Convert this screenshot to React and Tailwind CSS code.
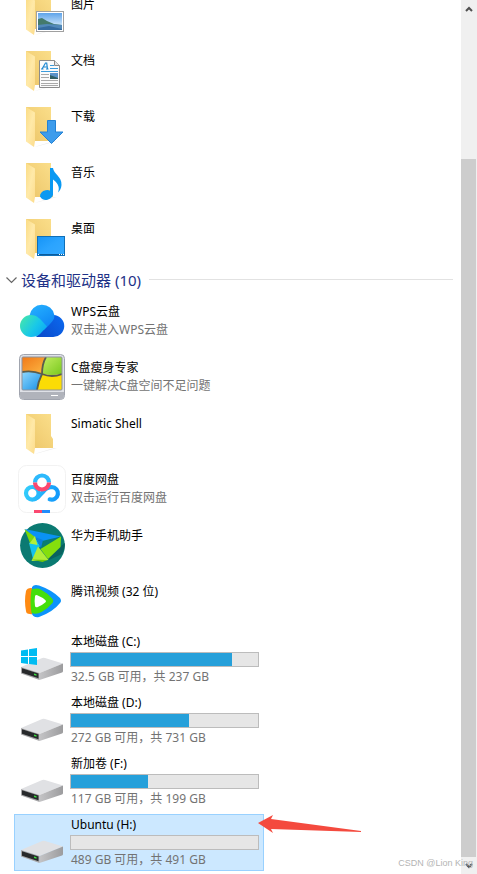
import { useId } from "react";

const Icon = ({ children }) => (
  <svg className="size-12 shrink-0 overflow-visible" viewBox="0 0 48 48" aria-hidden="true">
    {children}
  </svg>
);

const Folder = ({ children }) => {
  const id = useId();
  return (
    <Icon>
      <defs>
        <linearGradient id={`${id}back`} x1="0" y1="1" x2="1" y2="0">
          <stop offset="0" stopColor="#ecc568" />
          <stop offset="1" stopColor="#fbdf8b" />
        </linearGradient>
        <linearGradient id={`${id}flap`} x1="0" y1="0" x2="1" y2="1">
          <stop offset="0" stopColor="#fbdc85" />
          <stop offset="0.5" stopColor="#ffe9a8" />
          <stop offset="1" stopColor="#fcdc8c" />
        </linearGradient>
      </defs>
      <path d="M16 44l20-6h3l-18 5z" fill="#eeeeee" />
      <path d="M8 4h25v22l2 3v9H17L8 30z" fill={`url(#${id}back)`} />
      <path d="M8 4l9 5.500v28.500l-1 6L8 38.500z" fill={`url(#${id}flap)`} />
      {children}
    </Icon>
  );
};

const PicturesIcon = () => (
  <Folder>
    <defs>
      <linearGradient id="sky" x1="0" y1="0" x2="0" y2="1">
        <stop offset="0" stopColor="#5fa4ea" />
        <stop offset="1" stopColor="#f2fbff" />
      </linearGradient>
    </defs>
    <rect x="18.500" y="20.500" width="27" height="20" fill="#fff" stroke="#a0a0a0" />
    <rect x="20" y="22" width="24" height="17" fill="url(#sky)" />
    <path d="M20 28l4-1 5 3 7 3 8 1v5H20z" fill="#447a6c" />
    <path d="M20 34l9-1 15 1v5H20z" fill="#5289b9" />
    <path d="M20 37l11-2 13 3v1H20z" fill="#356ba0" />
  </Folder>
);

const DocumentsIcon = () => (
  <Folder>
    <path d="M21.500 13.500h15l5 5v22h-20z" fill="#fbfbfb" stroke="#8b8b8b" />
    <path d="M36.500 13.500v5h5" fill="#e4e4e4" stroke="#8b8b8b" />
    <path d="M24 22l3.500-6h1.200l.8 6M25.500 20h4M23 22h2.500M28 22h2.500" fill="none" stroke="#1e88d2" strokeWidth="1.200" />
    <path d="M32 18.500h4M32 21.500h8M23 24.500h17" stroke="#3a9bdc" strokeWidth="1" />
    <path d="M23 27.500h8M23 30.500h8M23 33.500h17M23 36.500h17M23 38.500h17" stroke="#a9a9a9" />
    <rect x="32" y="26" width="8" height="6" fill="#5a93c9" />
    <path d="M32 28l8 3v1h-8z" fill="#2f5f63" />
  </Folder>
);

const DownloadsIcon = () => (
  <Folder>
    <path d="M29.500 17.500h8V29h7.500L33.500 40.500 22 29h7.500z" fill="#3d9cec" stroke="#2482d4" />
  </Folder>
);

const MusicIcon = () => (
  <Folder>
    <ellipse cx="28.500" cy="36" rx="6.500" ry="4.800" fill="#0a99f2" transform="rotate(-12 28.500 36)" />
    <path d="M32 9h3c.5 6 9 8.500 8.500 17-.2 3-1.500 5.500-3.500 7.500 1.500-4 1.500-8-5-13V36h-3z" fill="#0a99f2" />
  </Folder>
);

const DesktopIcon = () => (
  <Folder>
    <defs>
      <linearGradient id="desk" x1="0" y1="0" x2="1" y2="1">
        <stop offset="0" stopColor="#1594f7" />
        <stop offset="0.5" stopColor="#2ba4ff" />
        <stop offset="1" stopColor="#35aaff" />
      </linearGradient>
    </defs>
    <rect x="19.500" y="21.500" width="27" height="19" fill="url(#desk)" stroke="#0f6fb8" />
    <path d="M20 39.500h26" stroke="#0b5c9d" />
    <path d="M20 39.500h1M41 39.500h1M43 39.500h1M45 39.500h1" stroke="#fff" />
  </Folder>
);

const WpsIcon = () => (
  <Icon>
    <defs>
      <linearGradient id="wpsTop" x1="0" y1="0" x2="0.600" y2="1">
        <stop offset="0" stopColor="#27b3ff" />
        <stop offset="1" stopColor="#0e86f5" />
      </linearGradient>
      <linearGradient id="wpsRight" x1="0" y1="1" x2="1" y2="0.300">
        <stop offset="0" stopColor="#0a48c8" />
        <stop offset="1" stopColor="#0b66ec" />
      </linearGradient>
      <linearGradient id="wpsLeft" x1="0" y1="0.200" x2="1" y2="0.800">
        <stop offset="0" stopColor="#43e5ae" />
        <stop offset="0.550" stopColor="#19c8e8" />
        <stop offset="1" stopColor="#0aa5f7" />
      </linearGradient>
    </defs>
    <path d="M35.500 17a11 11 0 0 1-.5 22H18l11-13z" fill="url(#wpsRight)" />
    <path d="M11.500 17.500a12.500 12 0 0 1 24.800-.5c.4 4-1.800 6.500-4.300 9L26 32 12 22z" fill="url(#wpsTop)" />
    <path d="M13 17c5 0 8 3 10.500 5.500L29 28.500l-7 7.500c-2 2-5 3-9 3a11 11 0 0 1 0-22z" fill="url(#wpsLeft)" />
  </Icon>
);

const SlimIcon = () => (
  <Icon>
    <defs>
      <linearGradient id="slimBlue" x1="0" y1="0" x2="1" y2="1">
        <stop offset="0" stopColor="#8fd8ff" />
        <stop offset="1" stopColor="#168fe4" />
      </linearGradient>
      <linearGradient id="slimOrange" x1="0" y1="0" x2="1" y2="1">
        <stop offset="0" stopColor="#f07818" />
        <stop offset="1" stopColor="#fdba45" />
      </linearGradient>
      <linearGradient id="slimGreen" x1="0" y1="0" x2="1" y2="1">
        <stop offset="0" stopColor="#c3ee62" />
        <stop offset="1" stopColor="#78c81d" />
      </linearGradient>
      <clipPath id="slimScreen">
        <rect x="4" y="3" width="40" height="33" rx="1" />
      </clipPath>
    </defs>
    <rect x="1.500" y="0.500" width="45" height="45" rx="4" fill="#dfe1e7" stroke="#a0a4ae" />
    <path d="M2 38h44v3q0 4-4 4H6q-4 0-4-4z" fill="#b0b3bb" />
    <g clipPath="url(#slimScreen)">
      <path d="M4 3h24q-4 8-4 17-10-4-20-2z" fill="url(#slimOrange)" />
      <path d="M28 3h16v17q-10 2-20 0 0-9 4-17z" fill="url(#slimGreen)" />
      <path d="M4 18q10-2 20 2-4 8-5 16H4z" fill="url(#slimBlue)" />
      <path d="M24 20q10 2 20 0v16H19q1-8 5-16z" fill="#fbdc05" />
      <path d="M4 18q10-2 20 2t20 0M28 3q-4 7-4 17-4 8-5 16" fill="none" stroke="#5b5d4d" strokeWidth="1.800" />
    </g>
    <rect x="4" y="3" width="40" height="33" rx="1" fill="none" stroke="#8d929c" />
    <path d="M33 41.500h7" stroke="#fff" />
  </Icon>
);

const BaiduIcon = () => (
  <Icon>
    <defs>
      <linearGradient id="panBlue" gradientUnits="userSpaceOnUse" x1="6" y1="20" x2="42" y2="30">
        <stop offset="0" stopColor="#36d0fb" />
        <stop offset="1" stopColor="#1196fb" />
      </linearGradient>
    </defs>
    <rect x="0.500" y="-0.500" width="47" height="47" rx="8" fill="#fff" stroke="#f2f2f2" />
    <g fill="none" strokeWidth="4.200">
      <circle cx="14.300" cy="27.300" r="6.300" stroke="url(#panBlue)" />
      <path d="M17 33q3-1 5-4l3-3q3-4.500 8.700-5a6.300 6.300 0 1 1-2 12.300" stroke="url(#panBlue)" strokeLinecap="round" />
      <path d="M17 16.500a7 7 0 0 1 14 0" stroke="#2db9fc" />
      <path d="M17 16.500a7 7 0 0 0 14 0" stroke="#fb4870" />
    </g>
    <path d="M16 44h8v3h-8z" fill="#fb4870" />
    <path d="M24 44h8v3h-8z" fill="#218cfb" />
  </Icon>
);

const HuaweiIcon = () => (
  <Icon>
    <circle cx="24.500" cy="23.500" r="22.400" fill="#0b7a72" />
    <path d="M28 37l15-13 4-3q0 6-3 11l-13 6z" fill="#09625f" />
    <path d="M11 21l7-4 4 7-7 13z" fill="#13c2ee" />
    <path d="M6.500 7L43 14.500 24 19l-7-3z" fill="#0a92f5" />
    <path d="M17 15l8 3-2 8z" fill="#0c7fdc" />
    <path d="M6.500 7L17 15l-5 6z" fill="#79d70b" />
    <path d="M17 14l2.500 9-8-1.500z" fill="#b4ef38" />
    <path d="M43 14.500l-.5 10.500L30 37l-7.500-10z" fill="#85df0d" />
    <path d="M20 24.500L30.500 38l-17 1z" fill="#b0ee38" />
    <path d="M13.500 37.500l16 .5-5 2z" fill="#6fc60a" />
  </Icon>
);

const TencentIcon = () => (
  <Icon>
    <path d="M8 13q1-3 5-3 3 0 5 2v22q-2 3-6 2-4 0-4-3-2-10 0-20z" fill="#ff8a12" />
    <path d="M14 9q2-3 7-1.500Q34 12 42 20q2 3 0 5Q35 34 21 39q-5 1-7-3z" fill="#0c93fb" />
    <path d="M13.500 11.500q6-2 10 .5 6 3 11 9 1.500 2 0 4-5 6-11 9-5 3-10 1-2-12 0-23.500z" fill="#45df0b" />
    <path d="M17 18.500q.3-2 2.300-1.300 5 2 8.200 5 1 1 0 2-3.200 3-8.200 5-2 .5-2.300-1.300-.8-5 0-9.400z" fill="#fff" />
  </Icon>
);

const DriveIcon = ({ system }) => {
  const id = useId();
  return (
    <Icon>
      <defs>
        <linearGradient id={`${id}side`} x1="0" y1="0" x2="1" y2="0">
          <stop offset="0" stopColor="#c4c4c6" />
          <stop offset="1" stopColor="#9c9c9e" />
        </linearGradient>
      </defs>
      <path d="M3 31l20-8.500q2-1 4-.5l18 5.500L21.500 37z" fill="#e0e1e4" />
      <path d="M21.500 37L45 27.500v7.500q0 1-1 1.500L21.500 44z" fill={`url(#${id}side)`} />
      <path d="M3 31l18.500 6v7L3 37.500z" fill="#a6a6a8" />
      <path d="M4 32.300l16.500 5.200v4.700L4 36.800z" fill="#27292b" />
      <path d="M16 37.500l2.500.8v1.500l-2.500-.8z" fill="#39e03e" />
      {system && (
        <path d="M3 14.500l7-1V20H3zM11 13.300l8-1.300v8h-8zM3 21h7v7l-7-1zM11 21h8v8l-8-1z" fill="#00bcf2" />
      )}
    </Icon>
  );
};

const folders = [
  { name: "图片", icon: PicturesIcon },
  { name: "文档", icon: DocumentsIcon },
  { name: "下载", icon: DownloadsIcon },
  { name: "音乐", icon: MusicIcon },
  { name: "桌面", icon: DesktopIcon },
];

const devices = [
  { name: "WPS云盘", note: "双击进入WPS云盘", icon: WpsIcon },
  { name: "C盘瘦身专家", note: "一键解决C盘空间不足问题", icon: SlimIcon },
  { name: "Simatic Shell", icon: Folder },
  { name: "百度网盘", note: "双击运行百度网盘", icon: BaiduIcon },
  { name: "华为手机助手", icon: HuaweiIcon },
  { name: "腾讯视频 (32 位)", icon: TencentIcon },
];

const drives = [
  { name: "本地磁盘 (C:)", space: "32.5 GB 可用，共 237 GB", used: 86, system: true },
  { name: "本地磁盘 (D:)", space: "272 GB 可用，共 731 GB", used: 63 },
  { name: "新加卷 (F:)", space: "117 GB 可用，共 199 GB", used: 41 },
  { name: "Ubuntu (H:)", space: "489 GB 可用，共 491 GB", used: 0, selected: true },
];

const Item = ({ name, note, icon: Glyph }) => (
  <li className="flex h-14 gap-1 px-1 py-1">
    <Glyph />
    <div className="pt-[5px] pl-px">
      <p>{name}</p>
      {note && <p className="text-[#737373]">{note}</p>}
    </div>
  </li>
);

const Drive = ({ name, space, used, system, selected }) => (
  <li className={`relative flex max-w-[250px] gap-1 border pt-px pr-1 pb-px pl-[3px] ${selected ? "border-[#99d1ff] bg-[#cce8ff]" : "border-transparent"}`}>
    <div className="pt-[3px]">
      <DriveIcon system={system} />
    </div>
    <div className="min-w-0 flex-1">
      <p className="pl-px">{name}</p>
      <div className="mt-px h-[15px] border border-[#bcbcbc] bg-[#e6e6e6]">
        <div className="h-full bg-[#26a0da]" style={{ width: `${used}%` }} />
      </div>
      <p className="pt-px pl-px text-[#737373]">{space}</p>
    </div>
    {selected && (
      <svg className="absolute top-0 left-[243px] h-5 w-[104px]" viewBox="0 0 104 20" aria-hidden="true">
        <path d="M0 8L15 0l-2 4 90 12v1L13 14l2 4z" fill="#f44a3e" />
      </svg>
    )}
  </li>
);

const ScrollBar = () => (
  <div className="flex w-4 shrink-0 flex-col bg-[#f0f0f0]">
    <button type="button" aria-label="向上滚动" className="flex h-[17px] items-center justify-center">
      <svg className="h-2 w-2" viewBox="0 0 8 8" aria-hidden="true">
        <path d="M1 6l3-3 3 3" fill="none" stroke="#505050" strokeWidth="2" />
      </svg>
    </button>
    <div className="flex-[142]" />
    <div className="mr-px flex-[698] bg-[#cdcdcd]" />
    <button type="button" aria-label="向下滚动" className="flex h-[17px] items-center justify-center">
      <svg className="h-2 w-2" viewBox="0 0 8 8" aria-hidden="true">
        <path d="M1 2l3 3 3-3" fill="none" stroke="#505050" strokeWidth="2" />
      </svg>
    </button>
  </div>
);

const App = () => (
  <div className="relative flex min-h-screen overflow-hidden bg-white font-['Noto_Sans','Noto_Sans_CJK_SC',sans-serif] text-xs/[18px] text-black">
    <main className="min-w-0 flex-1">
      <ul className="-mt-[13px] px-3.5">
        {folders.map((item) => (
          <Item key={item.name} {...item} />
        ))}
      </ul>
      <div className="flex h-[27px] items-center pr-2 pb-0.5 pl-1.5">
        <button type="button" className="flex items-center gap-1 text-[15px]/[20px] text-[#1e3287]">
          <svg className="h-3 w-[11px]" viewBox="0 0 11 12" aria-hidden="true">
            <path d="M0.500 3.500l5 5 5-5" fill="none" stroke="#666" strokeWidth="1.200" />
          </svg>
          <h2>设备和驱动器 (10)</h2>
        </button>
        <div className="ml-2 h-px flex-1 bg-[#e2e2e2]" />
      </div>
      <ul className="px-3.5">
        {devices.map((item) => (
          <Item key={item.name} {...item} />
        ))}
      </ul>
      <ul className="mt-px flex flex-col gap-1 px-3.5 pb-[3px]">
        {drives.map((drive) => (
          <Drive key={drive.name} {...drive} />
        ))}
      </ul>
    </main>
    <ScrollBar />
    <p className="absolute right-1 bottom-1 font-['Liberation_Sans',sans-serif] text-[9px]/[14px] text-[#b4b4b4]">
      CSDN @Lion King
    </p>
  </div>
);

export default App;
